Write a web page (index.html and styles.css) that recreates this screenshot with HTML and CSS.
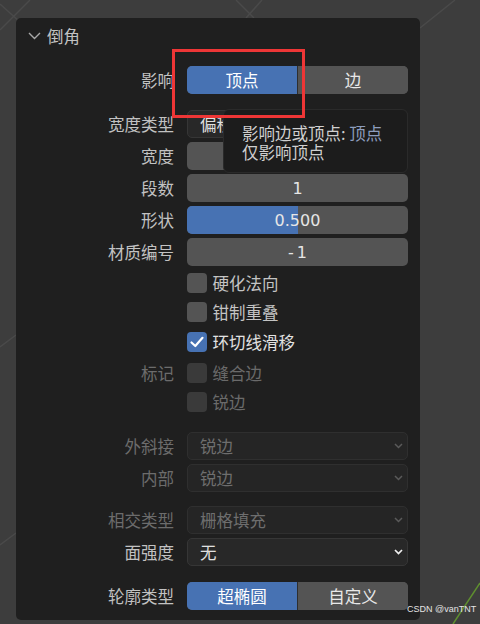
FILE: index.html
```html
<!DOCTYPE html>
<html lang="zh">
<head>
<meta charset="utf-8">
<link rel="stylesheet" href="styles.css">
</head>
<body>
<div class="stage">
  <svg class="viewport" width="480" height="624" viewBox="0 0 480 624">
    <g stroke="#4a4a4a" stroke-width="1.5" fill="none">
      <line x1="0" y1="4" x2="20" y2="22"/>
      <line x1="0" y1="30" x2="30" y2="0"/>
      <line x1="236" y1="0" x2="254" y2="18"/>
      <line x1="246" y1="18" x2="262" y2="0"/>
      <line x1="420" y1="28" x2="455" y2="0"/>
      <line x1="0" y1="347" x2="16" y2="335"/>
      <line x1="0" y1="545" x2="16" y2="533"/>
    </g>
    <line x1="453" y1="624" x2="480" y2="583" stroke="#5f8f2f" stroke-width="1.5"/>
  </svg>

  <div class="panel">
    <div class="header">
      <svg class="hchev" width="13" height="8" viewBox="0 0 13 8"><polyline points="1,1 6.5,6.5 12,1" fill="none" stroke="#a8a8a8" stroke-width="1.4"/></svg>
      <span>倒角</span>
    </div>

    <div class="group first">
      <div class="row">
        <div class="label">影响</div>
        <div class="toggle">
          <span class="seg on">顶点</span>
          <span class="seg">边</span>
        </div>
      </div>
    </div>

    <div class="group gap4 sec">
      <div class="row">
        <div class="label">宽度类型</div>
        <div class="menu"><span class="peek">偏移</span></div>
      </div>
      <div class="row">
        <div class="label">宽度</div>
        <div class="num"></div>
      </div>
      <div class="row">
        <div class="label">段数</div>
        <div class="num">1</div>
      </div>
      <div class="row">
        <div class="label">形状</div>
        <div class="num slider"><div class="fill" style="width:50%"></div><span>0.500</span></div>
      </div>
      <div class="row">
        <div class="label">材质编号</div>
        <div class="num minus">-1</div>
      </div>
    </div>

    <div class="group checks">
      <div class="crow">
        <div class="label"></div>
        <div class="check"><span class="box"></span><span>硬化法向</span></div>
      </div>
      <div class="crow">
        <div class="label"></div>
        <div class="check"><span class="box"></span><span>钳制重叠</span></div>
      </div>
      <div class="crow">
        <div class="label"></div>
        <div class="check"><span class="box on"><svg width="20" height="20" viewBox="0 0 20 20"><polyline points="4.5,10.5 8.3,14 15.5,5.8" fill="none" stroke="#ffffff" stroke-width="2.2" stroke-linecap="round" stroke-linejoin="round"/></svg></span><span class="bright">环切线滑移</span></div>
      </div>
    </div>

    <div class="group marks">
      <div class="mrow">
        <div class="label dim">标记</div>
        <div class="check dim"><span class="box"></span><span>缝合边</span></div>
      </div>
      <div class="mrow">
        <div class="label"></div>
        <div class="check dim"><span class="box"></span><span>锐边</span></div>
      </div>
    </div>

    <div class="group gap4 miter">
      <div class="row">
        <div class="label dim">外斜接</div>
        <div class="menu dim"><span>锐边</span><svg class="dchev" width="9" height="6" viewBox="0 0 9 6"><polyline points="1,1 4.5,4.5 8,1" fill="none" stroke="currentColor" stroke-width="1.5"/></svg></div>
      </div>
      <div class="row">
        <div class="label dim">内部</div>
        <div class="menu dim"><span>锐边</span><svg class="dchev" width="9" height="6" viewBox="0 0 9 6"><polyline points="1,1 4.5,4.5 8,1" fill="none" stroke="currentColor" stroke-width="1.5"/></svg></div>
      </div>
    </div>

    <div class="group gap4 inter">
      <div class="row">
        <div class="label dim">相交类型</div>
        <div class="menu dim"><span>栅格填充</span><svg class="dchev" width="9" height="6" viewBox="0 0 9 6"><polyline points="1,1 4.5,4.5 8,1" fill="none" stroke="currentColor" stroke-width="1.5"/></svg></div>
      </div>
      <div class="row">
        <div class="label">面强度</div>
        <div class="menu"><span>无</span><svg class="dchev" width="9" height="6" viewBox="0 0 9 6"><polyline points="1,1 4.5,4.5 8,1" fill="none" stroke="currentColor" stroke-width="1.7"/></svg></div>
      </div>
    </div>

    <div class="group profile">
      <div class="row">
        <div class="label">轮廓类型</div>
        <div class="toggle">
          <span class="seg on">超椭圆</span>
          <span class="seg">自定义</span>
        </div>
      </div>
    </div>
  </div>

  <div class="tooltip">影响边或顶点: <span class="val">顶点</span><br>仅影响顶点</div>
  <div class="redbox"></div>
  <div class="watermark">CSDN @vanTNT</div>
</div>
</body>
</html>
```

FILE: styles.css
```css
html, body {
  margin: 0;
  padding: 0;
  background: #3d3d3d;
}

.stage {
  position: relative;
  width: 480px;
  height: 624px;
  overflow: hidden;
  background: #3d3d3d;
  font-family: "Noto Sans CJK SC", "Noto Sans", sans-serif;
  font-size: 16.5px;
  color: #c4c4c4;
}

.viewport {
  position: absolute;
  left: 0;
  top: 0;
}

.panel {
  position: relative;
  margin: 18px 0 0 16px;
  width: 404px;
  height: 602px;
  box-sizing: border-box;
  background: #1f1f1f;
  border-radius: 5px;
  display: flex;
  flex-direction: column;
}

.header {
  height: 36px;
  display: flex;
  align-items: center;
  padding-left: 12px;
  gap: 6px;
  color: #c2c2c2;
  font-size: 16.5px;
}

.hchev {
  display: block;
}

.group {
  display: flex;
  flex-direction: column;
}

.gap4 { gap: 4px; }

.first { margin-top: 12px; }
.sec { margin-top: 16px; }
.checks { margin-top: 2px; }
.marks { margin-top: 2px; }
.miter { margin-top: 15.5px; }
.inter { margin-top: 14px; }
.profile { margin-top: 16px; }

.row, .crow, .mrow {
  display: grid;
  grid-template-columns: 158px 221px;
  column-gap: 13px;
  align-items: center;
}

.row { height: 28px; }
.crow { height: 29.5px; }
.mrow { height: 29px; }

.label {
  text-align: right;
  line-height: 28px;
  white-space: nowrap;
  color: #c2c2c2;
}

.label.dim { color: #6c6c6c; }

.toggle {
  display: flex;
  height: 28px;
  border-radius: 5px;
  overflow: hidden;
  background: #545454;
}

.seg {
  flex: 1;
  display: flex;
  align-items: center;
  justify-content: center;
  color: #e8e8e8;
  background: #545454;
}

.seg + .seg {
  border-left: 1px solid #2e2e2e;
}

.seg.on {
  background: #4772b3;
  color: #ffffff;
}

.num {
  position: relative;
  height: 28px;
  border-radius: 5px;
  background: #545454;
  display: flex;
  align-items: center;
  justify-content: center;
  overflow: hidden;
  color: #e6e6e6;
  font-family: "DejaVu Sans", "Noto Sans", sans-serif;
  font-size: 16px;
}

.num.minus {
  letter-spacing: 3px;
  padding-left: 3px;
  box-sizing: border-box;
}

.slider .fill {
  position: absolute;
  left: 0;
  top: 0;
  bottom: 0;
  background: #4772b3;
}

.slider span {
  position: relative;
}

.menu {
  height: 28px;
  box-sizing: border-box;
  border-radius: 5px;
  background: #282828;
  border: 1px solid #363636;
  display: flex;
  align-items: center;
  justify-content: space-between;
  padding: 0 4px 0 12px;
  color: #e0e0e0;
}

.menu .peek {
  display: block;
  width: 23px;
  overflow: hidden;
  white-space: nowrap;
}

.menu.dim {
  background: #252525;
  border-color: #2f2f2f;
  color: #6e6e6e;
}

.menu.dim .dchev { color: #5a5a5a; }
.menu .dchev { color: #f0f0f0; display: block; }

.check {
  display: flex;
  align-items: center;
  gap: 5.5px;
  color: #c4c4c4;
}

.check .bright { color: #e2e2e2; }

.box {
  width: 20px;
  height: 20px;
  border-radius: 4px;
  background: #545454;
  display: block;
}

.box.on {
  background: #4772b3;
}

.box svg { display: block; }

.check.dim { color: #6a6a6a; }
.check.dim .box { background: #3a3a3a; }

.tooltip {
  position: absolute;
  left: 223px;
  top: 109px;
  width: 185px;
  height: 64px;
  box-sizing: border-box;
  padding: 14px 0 0 18px;
  background: #1c1c1c;
  border: 1px solid #2a2a2a;
  border-radius: 6px;
  line-height: 19px;
  color: #cfcfcf;
  white-space: nowrap;
}

.tooltip .val { color: #8d9dbd; }

.redbox {
  position: absolute;
  left: 172px;
  top: 49px;
  width: 133px;
  height: 69px;
  box-sizing: border-box;
  border: 3px solid #ee3636;
}

.watermark {
  position: absolute;
  left: 407px;
  top: 604px;
  font-family: "Liberation Sans", Arial, sans-serif;
  font-size: 9px;
  color: #e4e4e4;
  white-space: nowrap;
}
```
